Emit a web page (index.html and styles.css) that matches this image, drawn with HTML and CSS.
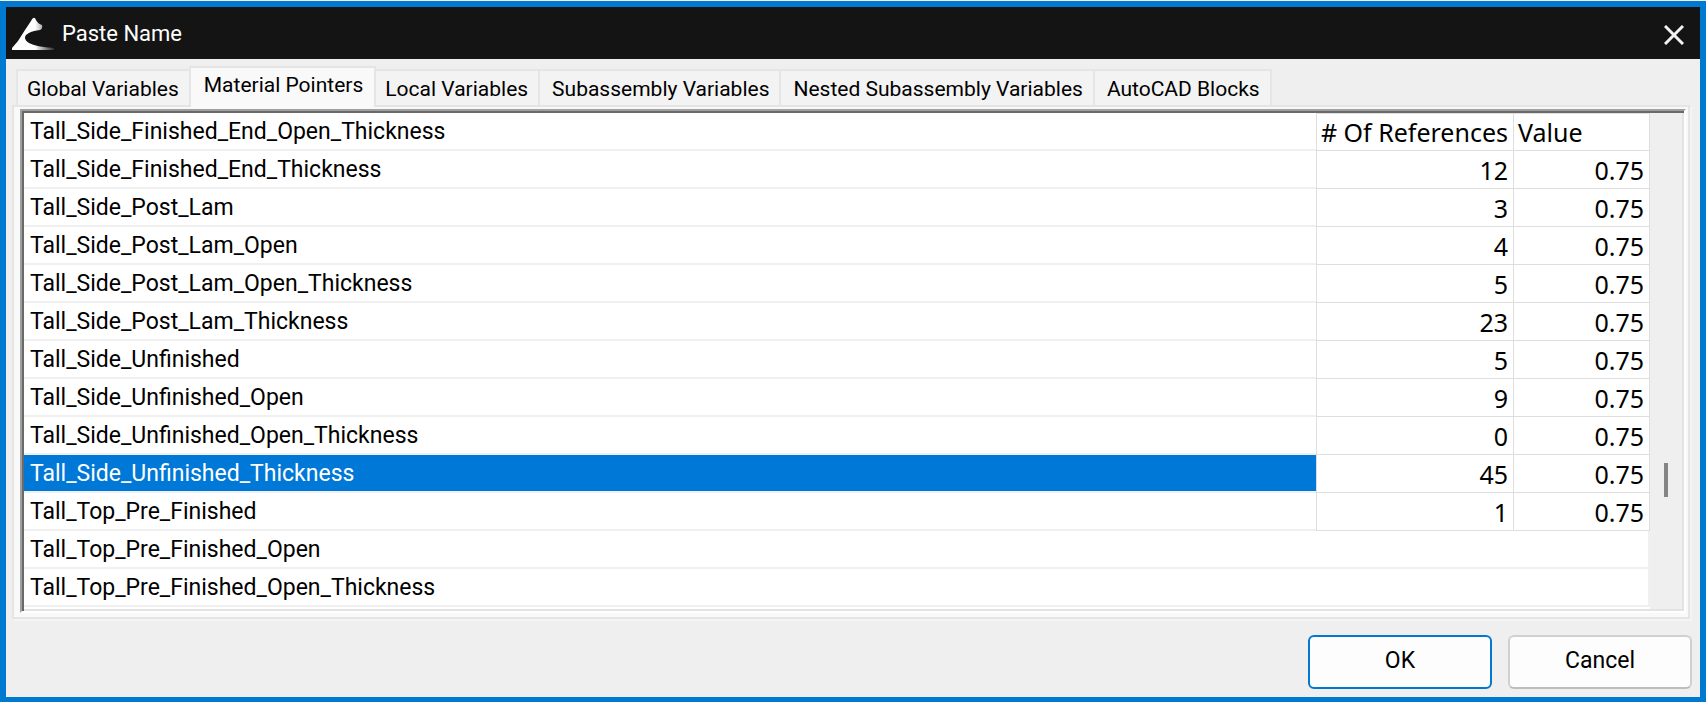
FILE: index.html
```html
<!DOCTYPE html>
<html lang="en">
<head>
<meta charset="utf-8">
<title>Paste Name</title>
<link rel="stylesheet" href="styles.css">
</head>
<body>
<main class="dialog">
  <header class="titlebar">
    <svg class="logo" viewBox="0 0 42 33" aria-hidden="true">
      <defs><linearGradient id="fade" x1="0" x2="1"><stop offset="0.55" stop-color="#fff"/><stop offset="1" stop-color="#fff" stop-opacity="0.1"/></linearGradient></defs>
      <path fill="url(#fade)" d="M0 33 L0 31 L6 24 L13 13 L19 4 Q22 -2 24 3 Q26 7 30 8 Q31 12 28 13 Q18 14 14 18 Q11 22 17 26 Q24 30 42 31 L42 33 Z"/>
    </svg>
    <h1 class="title">Paste Name</h1>
    <button class="close" type="button" aria-label="Close">
      <svg class="close-icon" viewBox="0 0 20 20" aria-hidden="true"><path d="M1 1 L19 19 M19 1 L1 19"/></svg>
    </button>
  </header>
  <section class="content">
    <div class="tabs" role="tablist">
      <button class="tab" role="tab" type="button">Global Variables</button>
      <button class="tab selected" role="tab" type="button" aria-selected="true">Material Pointers</button>
      <button class="tab" role="tab" type="button">Local Variables</button>
      <button class="tab" role="tab" type="button">Subassembly Variables</button>
      <button class="tab" role="tab" type="button">Nested Subassembly Variables</button>
      <button class="tab" role="tab" type="button">AutoCAD Blocks</button>
    </div>
    <div class="panel" role="tabpanel">
      <div class="list">
        <table class="grid">
          <colgroup><col><col class="col-refs"><col class="col-value"></colgroup>
          <tbody>
            <tr><td class="name">Tall_Side_Finished_End_Open_Thickness</td><th class="head"># Of References</th><th class="head">Value</th></tr>
            <tr><td class="name">Tall_Side_Finished_End_Thickness</td><td class="num">12</td><td class="num">0.75</td></tr>
            <tr><td class="name">Tall_Side_Post_Lam</td><td class="num">3</td><td class="num">0.75</td></tr>
            <tr><td class="name">Tall_Side_Post_Lam_Open</td><td class="num">4</td><td class="num">0.75</td></tr>
            <tr><td class="name">Tall_Side_Post_Lam_Open_Thickness</td><td class="num">5</td><td class="num">0.75</td></tr>
            <tr><td class="name">Tall_Side_Post_Lam_Thickness</td><td class="num">23</td><td class="num">0.75</td></tr>
            <tr><td class="name">Tall_Side_Unfinished</td><td class="num">5</td><td class="num">0.75</td></tr>
            <tr><td class="name">Tall_Side_Unfinished_Open</td><td class="num">9</td><td class="num">0.75</td></tr>
            <tr><td class="name">Tall_Side_Unfinished_Open_Thickness</td><td class="num">0</td><td class="num">0.75</td></tr>
            <tr><td class="name current">Tall_Side_Unfinished_Thickness</td><td class="num">45</td><td class="num">0.75</td></tr>
            <tr><td class="name">Tall_Top_Pre_Finished</td><td class="num">1</td><td class="num">0.75</td></tr>
            <tr><td class="name wide" colspan="3">Tall_Top_Pre_Finished_Open</td></tr>
            <tr><td class="name wide" colspan="3">Tall_Top_Pre_Finished_Open_Thickness</td></tr>
          </tbody>
        </table>
        <div class="track"><div class="thumb"></div></div>
      </div>
    </div>
  </section>
  <footer class="actions">
    <button class="action primary" type="button">OK</button>
    <button class="action" type="button">Cancel</button>
  </footer>
</main>
</body>
</html>
```
FILE: styles.css
```css
* { box-sizing: border-box; }

body {
  margin: 0;
  background: #f0f0f0;
  color: #000;
  font: 23px/30px Roboto, "Liberation Sans", sans-serif;
}

button { font: inherit; color: inherit; }

.dialog {
  display: flex;
  flex-direction: column;
  min-height: calc(100vh - 1px);
  margin-top: 1px;
  border: 6px solid #0079d0;
  border-bottom-width: 5px;
  background: #efefef;
}

.titlebar {
  display: flex;
  align-items: center;
  height: 52px;
  padding-left: 6px;
  background: #141414;
  color: #fff;
}

.logo { width: 42px; height: 33px; }

.title {
  flex: 1;
  margin: 0;
  padding: 2px 0 0 8px;
  font-size: 22px;
  font-weight: 400;
}

.close {
  width: 52px;
  height: 52px;
  padding: 0;
  border: 0;
  background: none;
}

.close-icon { width: 20px; height: 20px; display: block; margin: 4px auto 0; }
.close-icon path { stroke: #f2f2f2; stroke-width: 3; fill: none; }

.content {
  flex: 1;
  display: flex;
  flex-direction: column;
  padding: 7px 10px 0 6px;
}

.tabs {
  display: flex;
  align-items: flex-end;
  padding-left: 4px;
}

.tab {
  height: 36px;
  padding: 1px 10px 0 12px;
  border: 2px solid #e5e5e5;
  border-width: 2px 2px 0 0;
  background: #f3f3f3;
  font-size: 21px;
  line-height: 30px;
  white-space: nowrap;
}

.tab:first-child { padding-left: 9px; border-left-width: 2px; }
.tab.selected + .tab { padding-left: 9px; }

.tab.selected {
  position: relative;
  z-index: 1;
  height: 41px;
  margin: 0 0 -2px -2px;
  padding: 0 11px 6px 13px;
  border-left-width: 2px;
  background: #f9f9f9;
}

.panel {
  flex: 1;
  display: flex;
  padding: 2px 2px 4px 6px;
  border: 2px solid #e5e5e5;
  background: #f9f9f9;
  box-shadow: 2px 2px #f4f4f4;
}

.list {
  flex: 1;
  display: flex;
  border: 2px solid;
  border-color: #a0a0a0 #fff #fff #a0a0a0;
  background: #fff;
  box-shadow: inset 2px 2px #696969, inset -2px -2px #e3e3e3;
  padding: 2px;
}

.grid {
  flex: 1;
  align-self: flex-start;
  table-layout: fixed;
  border-spacing: 0;
}

.col-refs { width: 197px; }
.col-value { width: 137px; }

.grid td, .grid th { height: 38px; padding: 0; }

.grid .name {
  padding: 2px 0 0 6px;
  border-bottom: 2px solid #f0f0f0;
}

.grid .current { background: #0078d7; color: #fff; }

.grid .wide { border-right: 2px solid #f0f0f0; }

.grid .num, .grid .head {
  padding: 0 5px 0 4px;
  border-bottom: 1px solid #dedede;
  border-left: 1px solid #dedede;
  font: 25px/34px "Noto Sans", "Open Sans", sans-serif;
  text-align: right;
  white-space: nowrap;
}

.grid .head { text-align: left; border-top: 1px solid #dedede; }

.grid .num:last-child, .grid .head:last-child { border-right: 1px solid #dedede; }

.track {
  display: flex;
  justify-content: center;
  width: 32px;
  padding-top: 350px;
  background: #efefef;
}

.thumb { width: 4px; height: 34px; background: #858585; }

.actions {
  display: flex;
  justify-content: flex-end;
  gap: 16px;
  padding: 16px 8px 8px;
}

.action {
  width: 184px;
  height: 54px;
  padding: 0 0 2px;
  border: 2px solid #d0d0d0;
  border-bottom-color: #bdbdbd;
  border-radius: 6px;
  background: #fdfdfd;
}

.action.primary { border-color: #0078d4; }
```
